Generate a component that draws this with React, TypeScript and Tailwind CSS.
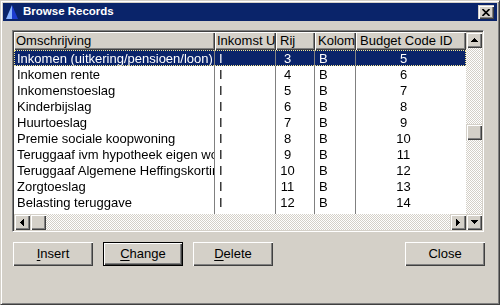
import React from 'react';

const rows = [
  { oms: 'Inkomen (uitkering/pensioen/loon)', ink: 'I', rij: '3', kol: 'B', code: '5' },
  { oms: 'Inkomen rente', ink: 'I', rij: '4', kol: 'B', code: '6' },
  { oms: 'Inkomenstoeslag', ink: 'I', rij: '5', kol: 'B', code: '7' },
  { oms: 'Kinderbijslag', ink: 'I', rij: '6', kol: 'B', code: '8' },
  { oms: 'Huurtoeslag', ink: 'I', rij: '7', kol: 'B', code: '9' },
  { oms: 'Premie sociale koopwoning', ink: 'I', rij: '8', kol: 'B', code: '10' },
  { oms: 'Teruggaaf ivm hypotheek eigen woning', ink: 'I', rij: '9', kol: 'B', code: '11' },
  { oms: 'Teruggaaf Algemene Heffingskorting', ink: 'I', rij: '10', kol: 'B', code: '12' },
  { oms: 'Zorgtoeslag', ink: 'I', rij: '11', kol: 'B', code: '13' },
  { oms: 'Belasting teruggave', ink: 'I', rij: '12', kol: 'B', code: '14' },
];

// klassieke 3D randen
const raised =
  'shadow-[inset_1px_1px_#d4d0c8,inset_2px_2px_#fff,inset_-1px_-1px_#404040,inset_-2px_-2px_#808080]';
const btnRaised = 'shadow-[inset_1px_1px_#fff,inset_-1px_-1px_#404040,inset_-2px_-2px_#808080]';
const checker =
  'bg-[image:conic-gradient(#fff_25%,#d4d0c8_0_50%,#fff_0_75%,#d4d0c8_0)] bg-[length:2px_2px]';

const Arrow: React.FC<{ dir: 'up' | 'down' | 'left' | 'right' }> = ({ dir }) => {
  const pts = {
    up: '3.5,0 0,4 7,4',
    down: '0,0 7,0 3.5,4',
    left: '4,0 4,7 0,3.5',
    right: '0,0 0,7 4,3.5',
  }[dir];
  const vert = dir === 'up' || dir === 'down';
  return (
    <svg width={vert ? 7 : 4} height={vert ? 4 : 7} viewBox={vert ? '0 0 7 4' : '0 0 4 7'}>
      <polygon points={pts} fill="#000" shapeRendering="crispEdges" />
    </svg>
  );
};

const ScrollBtn: React.FC<{ dir: 'up' | 'down' | 'left' | 'right' }> = ({ dir }) => (
  <div className={`w-[16px] h-[16px] shrink-0 bg-[#d4d0c8] flex items-center justify-center ${raised}`}>
    <Arrow dir={dir} />
  </div>
);

const Button: React.FC<{ children: React.ReactNode; isDefault?: boolean }> = ({ children, isDefault }) => (
  <button
    className={`w-[80px] h-[24px] bg-[#d4d0c8] text-[13px] text-black flex items-center justify-center ${btnRaised} ${
      isDefault ? 'border border-black' : ''
    }`}
  >
    {children}
  </button>
);

const cols = ['w-[201px]', 'w-[61px]', 'w-[39px]', 'w-[41px]', 'w-[110px]'];

export default function App() {
  return (
    <div className="w-[500px] h-[305px] bg-[#d4d0c8] border border-[#d4d0c8] border-r-[#404040] border-b-[#404040] shadow-[inset_1px_1px_#fff,inset_-1px_-1px_#808080] p-[2px] font-['Liberation_Sans',Arial,sans-serif] antialiased select-none">
      {/* Titelbalk */}
      <div className="h-[18px] bg-[#0a246a] flex items-center">
        <svg width="14" height="16" viewBox="0 0 14 16" className="ml-[2px]">
          <polygon points="7,1 1,15 7,15" fill="#8ab4ff" />
          <polygon points="7,1 13,15 7,15" fill="#1c3cd0" />
        </svg>
        <span className="ml-[4px] text-white font-bold text-[11.5px]">Browse Records</span>
        <div className={`ml-auto mr-[3px] w-[16px] h-[14px] bg-[#d4d0c8] flex items-center justify-center ${raised}`}>
          <svg width="8" height="7" viewBox="0 0 8 7">
            <path d="M0.5 0 L7.5 7 M7.5 0 L0.5 7" stroke="#000" strokeWidth="1.6" />
          </svg>
        </div>
      </div>

      {/* Lijst */}
      <div className="mt-[9px] ml-[9px] w-[472px] h-[202px] border border-[#808080] border-r-white border-b-white shadow-[inset_1px_1px_#404040,inset_-1px_-1px_#d4d0c8] p-[1px] flex">
        <div className="w-[452px] flex flex-col">
          {/* Kolomkoppen */}
          <div className="h-[18px] flex text-[13px] text-black">
            {[
              ['Omschrijving', 'pl-[2px]'],
              ['Inkomst U', 'pl-[2px]'],
              ['Rij', 'pl-[4px]'],
              ['Kolom', 'pl-[3px]'],
              ['Budget Code ID', 'pl-[4px]'],
            ].map(([label, pad], i) => (
              <div
                key={label}
                className={`${cols[i]} h-full bg-[#d4d0c8] ${btnRaised} ${pad} flex items-center overflow-hidden whitespace-nowrap`}
              >
                {label}
              </div>
            ))}
          </div>

          {/* Rijen */}
          <div className="h-[164px] bg-white flex flex-col text-[13px] [will-change:transform]">
            {rows.map((r, idx) => {
              const sel = idx === 0;
              return (
                <div
                  key={r.oms}
                  className={`relative h-[16px] flex ${sel ? 'bg-[#0a246a] text-white' : 'text-black'}`}
                >
                  <div className={`${cols[0]} border-r border-[#808080] pl-[3px] overflow-hidden whitespace-nowrap leading-[17px]`}>
                    {r.oms}
                  </div>
                  <div className={`${cols[1]} border-r border-[#808080] pl-[4px] overflow-hidden whitespace-nowrap leading-[17px]`}>
                    {r.ink}
                  </div>
                  <div className={`${cols[2]} border-r border-[#808080] pr-[15px] text-center leading-[17px]`}>
                    {r.rij}
                  </div>
                  <div className={`${cols[3]} border-r border-[#808080] pl-[4px] leading-[17px]`}>{r.kol}</div>
                  <div className={`${cols[4]} pr-[15px] text-center leading-[17px]`}>{r.code}</div>
                  {sel && (
                    <div className="absolute inset-0 border border-dotted border-[#f4e890] pointer-events-none" />
                  )}
                </div>
              );
            })}
            <div className="flex-1 flex">
              <div className={`${cols[0]} border-r border-[#808080]`} />
              <div className={`${cols[1]} border-r border-[#808080]`} />
              <div className={`${cols[2]} border-r border-[#808080]`} />
              <div className={`${cols[3]} border-r border-[#808080]`} />
            </div>
          </div>

          {/* Horizontale scrollbalk */}
          <div className={`h-[16px] flex ${checker}`}>
            <ScrollBtn dir="left" />
            <div className={`w-[16px] h-[16px] bg-[#d4d0c8] ${raised}`} />
            <div className="flex-1" />
            <ScrollBtn dir="right" />
          </div>
        </div>

        {/* Verticale scrollbalk */}
        <div className={`w-[16px] h-full flex flex-col ${checker}`}>
          <ScrollBtn dir="up" />
          <div className="h-[76px]" />
          <div className={`w-[16px] h-[16px] bg-[#d4d0c8] ${raised}`} />
          <div className="flex-1" />
          <ScrollBtn dir="down" />
        </div>
      </div>

      {/* Knoppen */}
      <div className="mt-[10px] ml-[10px] mr-[12px] flex gap-[10px]">
        <Button>
          <span className="underline underline-offset-2">I</span>nsert
        </Button>
        <Button isDefault>
          <span className="underline underline-offset-2">C</span>hange
        </Button>
        <Button>
          <span className="underline underline-offset-2">D</span>elete
        </Button>
        <div className="ml-auto">
          <Button>Close</Button>
        </div>
      </div>
    </div>
  );
}
